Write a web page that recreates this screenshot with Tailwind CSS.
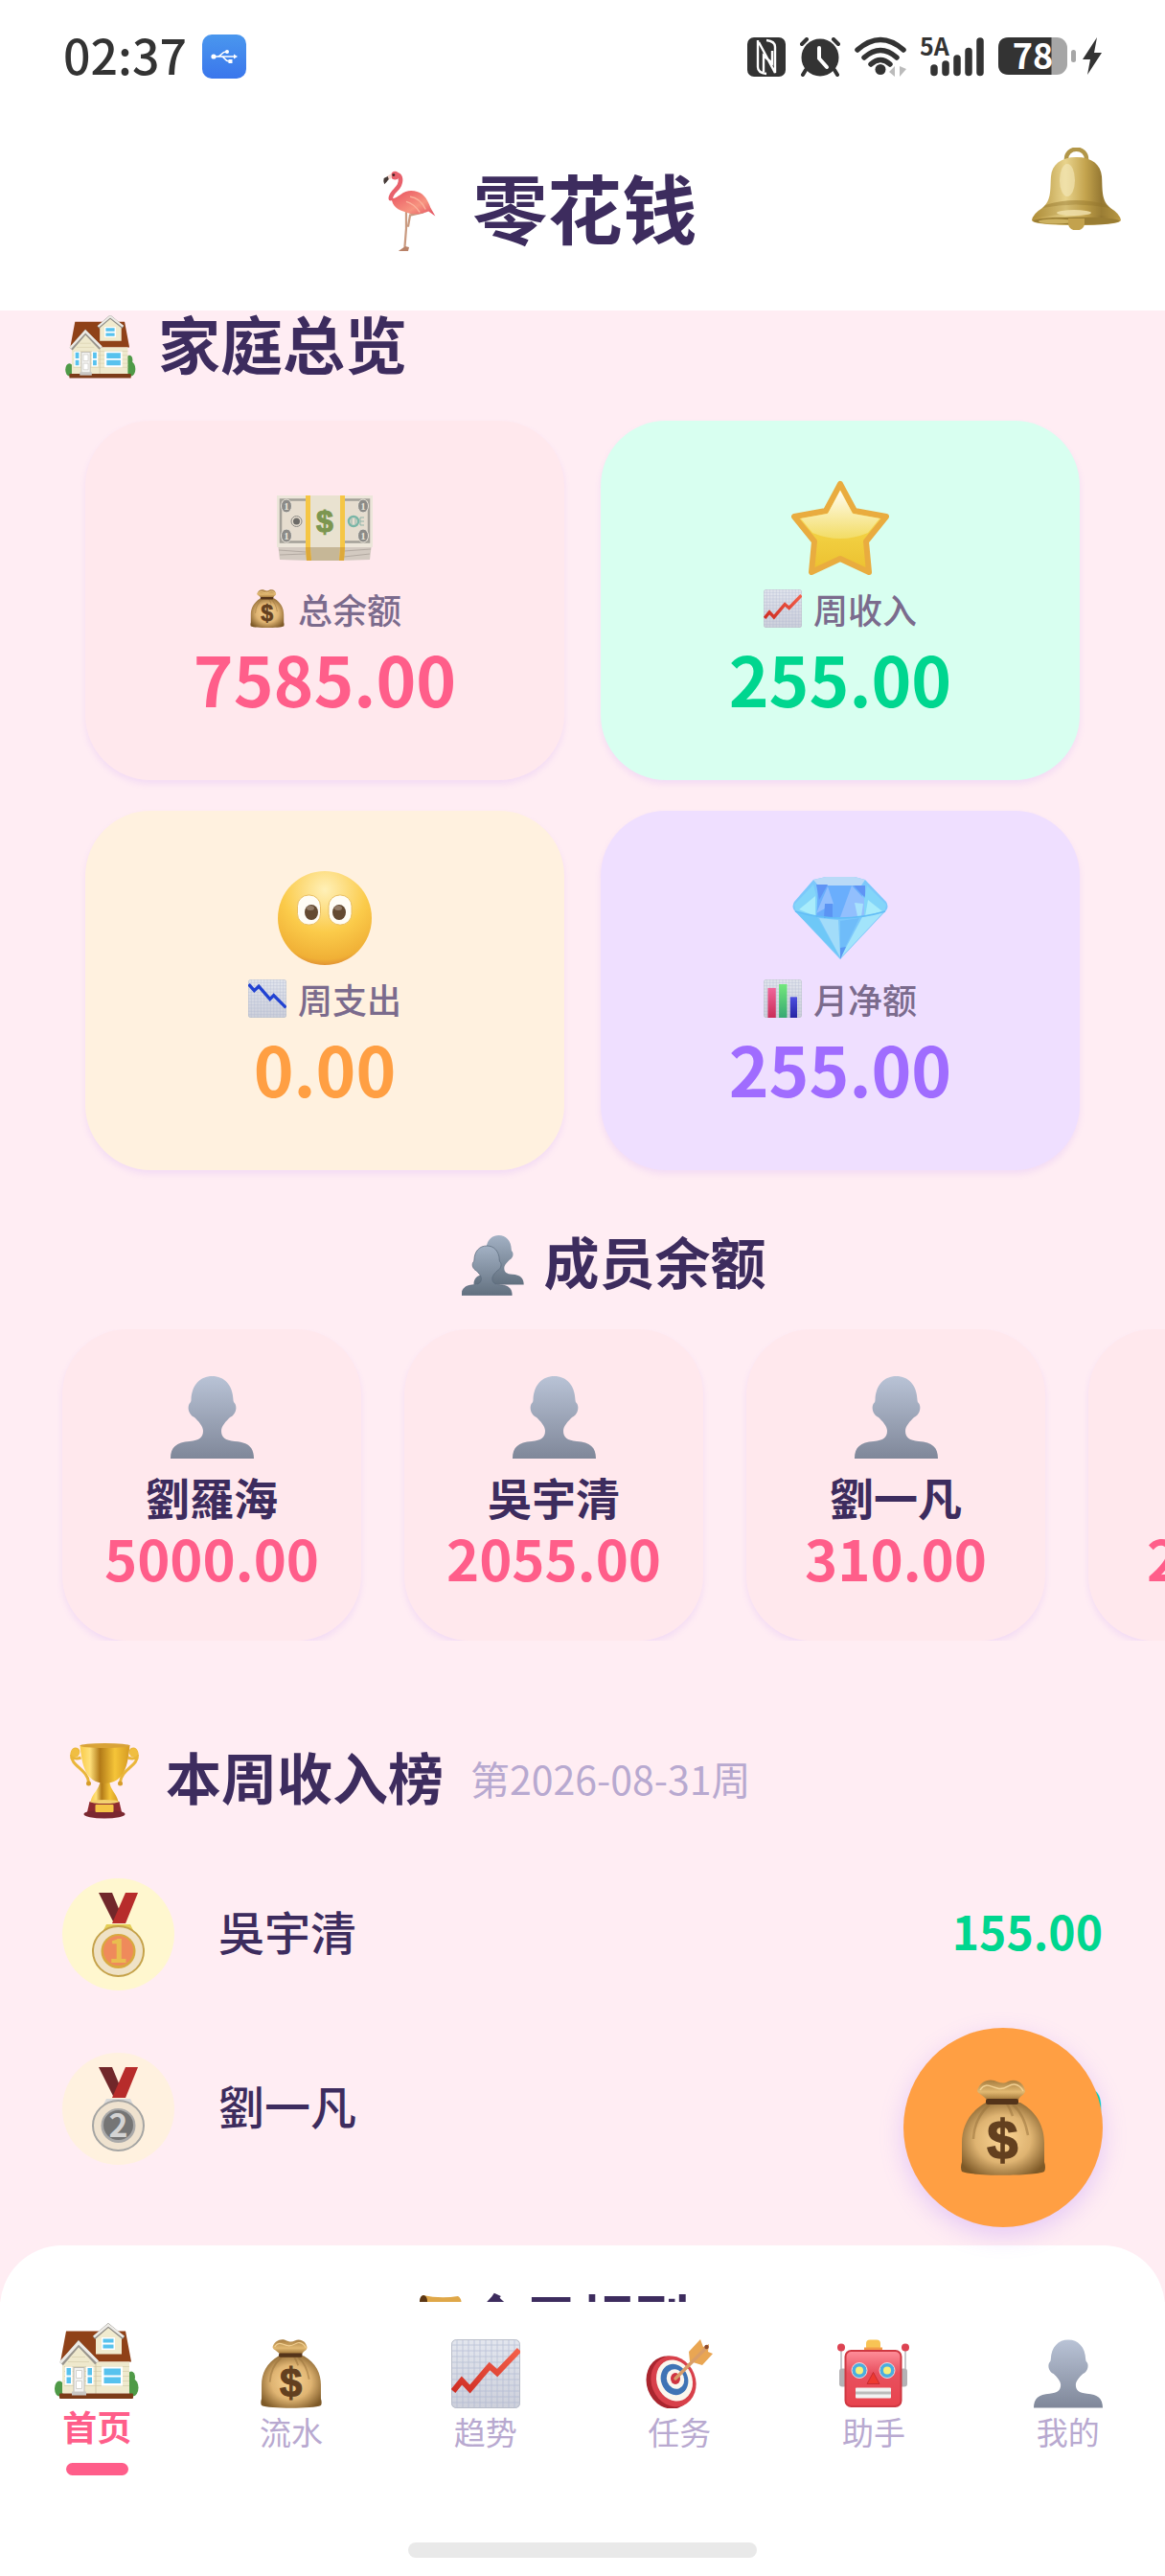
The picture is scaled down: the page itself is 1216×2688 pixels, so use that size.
<!DOCTYPE html>
<html lang="zh-CN">
<head>
    <meta charset="UTF-8">
    <meta name="viewport" content="width=device-width, initial-scale=1.0">
    <title>零花钱</title>
    <script src="https://cdn.jsdelivr.net/npm/@tailwindcss/browser@4"></script>
</head>
<body class="bg-[#ffedf3] font-['Noto_Sans_CJK_SC',sans-serif] text-[#3d2c5e]">

    <!-- Icon sprite -->
    <svg class="absolute w-0 h-0" aria-hidden="true">
        <defs>
            <linearGradient id="g-person" x1="0" y1="0" x2="0" y2="1"><stop offset="0" stop-color="#b9c3d6"/><stop offset="1" stop-color="#7f8799"/></linearGradient>
            <linearGradient id="g-person2" x1="0" y1="0" x2="0" y2="1"><stop offset="0" stop-color="#a3b1c4"/><stop offset="1" stop-color="#62707f"/></linearGradient>
            <radialGradient id="g-bag" cx=".5" cy=".5" r=".6"><stop offset="0" stop-color="#fbd594"/><stop offset=".55" stop-color="#dfb472"/><stop offset="1" stop-color="#7d5927"/></radialGradient>
            <linearGradient id="g-neck" x1="0" y1="0" x2="0" y2="1"><stop offset="0" stop-color="#a67c3f"/><stop offset=".6" stop-color="#e2b972"/><stop offset="1" stop-color="#a1773a"/></linearGradient>
            <linearGradient id="g-paper" x1="0" y1="0" x2="0" y2="1"><stop offset="0" stop-color="#e3e6ee"/><stop offset="1" stop-color="#cdd0db"/></linearGradient>
            <linearGradient id="g-red" x1="0" y1="1" x2="1" y2="0"><stop offset="0" stop-color="#cf2e24"/><stop offset="1" stop-color="#f4604a"/></linearGradient>
            <linearGradient id="g-pinkbar" x1="0" y1="0" x2="0" y2="1"><stop offset="0" stop-color="#f0659a"/><stop offset="1" stop-color="#c92d58"/></linearGradient>
            <linearGradient id="g-greenbar" x1="0" y1="0" x2="0" y2="1"><stop offset="0" stop-color="#72e87c"/><stop offset="1" stop-color="#37a873"/></linearGradient>
            <linearGradient id="g-bluebar" x1="0" y1="0" x2="0" y2="1"><stop offset="0" stop-color="#4d4fe0"/><stop offset="1" stop-color="#2524a3"/></linearGradient>
            <linearGradient id="g-star" x1="0" y1="0" x2="0" y2="1"><stop offset="0" stop-color="#fff3b0"/><stop offset=".55" stop-color="#f2d143"/><stop offset="1" stop-color="#ecc02f"/></linearGradient>
            <linearGradient id="g-starhi" x1="0" y1="0" x2="0" y2="1"><stop offset="0" stop-color="#ffffff"/><stop offset="1" stop-color="#f3df6c"/></linearGradient>
            <radialGradient id="g-face" cx=".5" cy=".2" r=".82"><stop offset="0" stop-color="#fff0b8"/><stop offset=".55" stop-color="#fbcb4a"/><stop offset=".9" stop-color="#f0b036"/><stop offset="1" stop-color="#dd8a33"/></radialGradient>
            <linearGradient id="g-gold" x1="0" y1="0" x2="1" y2="0"><stop offset="0" stop-color="#f9cb49"/><stop offset=".2" stop-color="#ffe07a"/><stop offset=".4" stop-color="#b27a18"/><stop offset=".7" stop-color="#f5c438"/><stop offset="1" stop-color="#d59a22"/></linearGradient>
            <linearGradient id="g-bell" x1="0" y1="0" x2="1" y2="0"><stop offset="0" stop-color="#b08d35"/><stop offset=".38" stop-color="#e8d38c"/><stop offset=".6" stop-color="#c4a44e"/><stop offset=".78" stop-color="#957832"/><stop offset="1" stop-color="#bd9c45"/></linearGradient>
            <linearGradient id="g-robot" x1="0" y1="0" x2="0" y2="1"><stop offset="0" stop-color="#ff8f9a"/><stop offset=".4" stop-color="#e8505f"/><stop offset="1" stop-color="#e8434d"/></linearGradient>
            <linearGradient id="g-usb" x1="0" y1="0" x2="0" y2="1"><stop offset="0" stop-color="#4a97ee"/><stop offset="1" stop-color="#3a76ec"/></linearGradient>
            <linearGradient id="g-flamingo" x1="0" y1="0" x2="1" y2="1"><stop offset="0" stop-color="#e8505f"/><stop offset=".6" stop-color="#f79480"/><stop offset="1" stop-color="#e0485c"/></linearGradient>

            <path id="person-shape" d="M0 86C0 74 6 69 20 68C30 67 34 64 34 57C34 52 29 47 25 43C20 41 17 34 19.500 29Q21.700 27 21.500 25C22 9 31 0 43.500 0C56 0 65 9 65.500 25Q65.300 27 67.500 29C70 34 67 41 62 43C58 47 53 52 53 57C53 64 57 67 67 68C81 69 87 74 87 86Z"/>
        </defs>

        <symbol id="person" viewBox="0 0 87 86"><use href="#person-shape" fill="url(#g-person)"/></symbol>

        <symbol id="people" viewBox="0 0 65 63">
            <use href="#person-shape" fill="url(#g-person2)" transform="translate(12.500 0) scale(.6)"/>
            <use href="#person-shape" fill="url(#g-person2)" stroke="#5b6a7c" stroke-width="1.200" transform="translate(0 11) scale(.6)"/>
        </symbol>

        <symbol id="bag" viewBox="0 0 88 100">
            <path d="M26 24C8 34 1 50 1 66V86Q-1 92 1 96C12 101 76 101 87 96Q89 92 87 86V66C87 50 80 34 62 24Z" fill="url(#g-bag)"/>
            <path d="M30 26Q14 40 13 62M54 26Q66 36 70 58M48 25Q52 32 54 38" fill="none" stroke="#96703a" stroke-width="2.500" opacity=".5"/>
            <path d="M27 21C22 15 17 15 17 11C20 3 27-1 35 1C40 3 44 5 49 2C58-2 66 4 67 12C66 17 62 16 60 21Z" fill="url(#g-neck)"/>
            <path d="M20 11C25 2 32 8 38 9C46 12 50 4 56 5Q62 6 65 12" fill="none" stroke="#f3d194" stroke-width="1.500"/>
            <rect x="26" y="20" width="34" height="6" rx="2" fill="#54341a"/>
            <text x="43.500" y="83" font-family="Liberation Sans" font-weight="700" font-size="58" text-anchor="middle" fill="#63401f" stroke="#63401f" stroke-width="1.500">$</text>
        </symbol>

        <symbol id="paper" viewBox="0 0 72 72">
            <rect width="72" height="72" rx="5" fill="url(#g-paper)"/>
            <path d="M6 0V72M12 0V72M18 0V72M24 0V72M30 0V72M36 0V72M42 0V72M48 0V72M54 0V72M60 0V72M66 0V72M0 6H72M0 12H72M0 18H72M0 24H72M0 30H72M0 36H72M0 42H72M0 48H72M0 54H72M0 60H72M0 66H72" stroke="#aab4cf" stroke-width=".8" opacity=".7"/>
            <rect x=".5" y=".5" width="71" height="71" rx="5" fill="none" stroke="#b9bdc9"/>
        </symbol>
        <symbol id="chart-up" viewBox="0 0 72 72">
            <use href="#paper"/>
            <path d="M2 54L11 43L19.500 52L40 28L48 35L71 11" fill="none" stroke="url(#g-red)" stroke-width="6"/>
        </symbol>
        <symbol id="chart-down" viewBox="0 0 72 72">
            <use href="#paper"/>
            <path d="M1 9L11.500 21L20 13L41 37L48 30L71 53" fill="none" stroke="#2142d2" stroke-width="6"/>
        </symbol>
        <symbol id="chart-bar" viewBox="0 0 72 72">
            <use href="#paper"/>
            <rect x="8" y="16" width="15" height="56" fill="url(#g-pinkbar)"/>
            <rect x="29" y="9" width="15" height="63" fill="url(#g-greenbar)"/>
            <rect x="50" y="33" width="13" height="39" fill="url(#g-bluebar)"/>
        </symbol>

        <symbol id="cash" viewBox="0 0 100 68">
            <path d="M1 50H99L97 67Q50 69 3 67Z" fill="#d3cac1"/>
            <path d="M2 57L30 59M3 62L30 61M70 58L98 56M70 64L97 61" stroke="#b3aaa2" stroke-width="1"/>
            <rect width="100" height="54" fill="#ece6da"/>
            <rect x="4" y="4.500" width="92" height="44" fill="#e6ddcf" stroke="#a3a098" stroke-width="2.500"/>
            <g fill="#8c8b88" stroke="#e9e3d8" stroke-width="1"><ellipse cx="10" cy="11" rx="5.500" ry="7"/><ellipse cx="90" cy="11" rx="5.500" ry="7"/><ellipse cx="10" cy="42" rx="5.500" ry="7"/><ellipse cx="90" cy="42" rx="5.500" ry="7"/></g>
            <g font-family="Liberation Serif" font-weight="700" font-size="11" text-anchor="middle" fill="#ebe5da"><text x="10" y="15">1</text><text x="90" y="15">1</text><text x="10" y="46">1</text><text x="90" y="46">1</text></g>
            <circle cx="20.500" cy="27" r="3.500" fill="#6d6b67"/><circle cx="20.500" cy="27" r="5.500" fill="none" stroke="#8c8a85"/>
            <circle cx="80" cy="27" r="5" fill="none" stroke="#79b5a6" stroke-width="2.500"/><path d="M78 24V30M82 24V30M87 23H91M87 27H91M87 31H91M87 23V31" stroke="#8fb3a8"/>
            <path d="M30 0H71V54L70 68H31L30 54Z" fill="#f5c645"/>
            <path d="M35 0H66V54L65 68H36L35 54Z" fill="#e9e2d0"/>
            <path d="M35 54H66L65 68H36Z" fill="#c6b797"/>
            <path d="M30 54H35L36 68H31ZM66 54H71L70 68H65Z" fill="#dda93a"/>
            <text x="50" y="38" font-family="Liberation Sans" font-weight="700" font-size="32" text-anchor="middle" fill="#7c9650" stroke="#7c9650" stroke-width="1">$</text>
        </symbol>

        <symbol id="star" viewBox="0 0 102 98">
            <path d="M51 3L66 31L99 37L78 63L81 95L51 81L21 95L24 63L3 37L36 31Z" fill="url(#g-star)" stroke="#e9ac3f" stroke-width="6" stroke-linejoin="round"/>
            <path d="M51 10L64 34L92 39L80 54Q51 66 22 54L10 39L38 34Z" fill="url(#g-starhi)" opacity=".85"/>
        </symbol>

        <symbol id="face" viewBox="0 0 98 98">
            <circle cx="49" cy="49" r="49" fill="url(#g-face)"/>
            <g fill="#fffdf6" stroke="#e9bf62" stroke-width="1"><rect x="20.500" y="25" width="24" height="31" rx="11.500"/><rect x="53" y="25" width="24" height="31" rx="11.500"/></g>
            <g fill="#644a31"><ellipse cx="35" cy="43" rx="7" ry="8"/><ellipse cx="64" cy="43" rx="7" ry="8"/></g>
            <g fill="#937c66"><ellipse cx="34" cy="38.500" rx="4" ry="2.500"/><ellipse cx="63" cy="38.500" rx="4" ry="2.500"/></g>
        </symbol>

        <symbol id="diamond" viewBox="0 0 100 86">
            <path d="M22 3L35 0H65L76 3L98 26Q101 31 98 35L50 86L2 35Q-1 31 2 26Z" fill="#7cc8fb"/>
            <path d="M22 3L35 0H65L76 3L72 9H27Z" fill="#b9daf7"/>
            <path d="M27 9H72L75 42H25Z" fill="#6aaefc"/>
            <path d="M25 8H37L28 24ZM64 9H76V22Z" fill="#5f94f5"/>
            <path d="M37 10L43 28L25 38ZM62 9L76 24V42H50Z" fill="#92bffd"/>
            <path d="M22 8L2 29L4 37L25 41L26 24ZM78 9L98 29L96 37L75 41V24Z" fill="#83d5f9"/>
            <path d="M24 20L7 34L24 41ZM79 24L94 36L76 41Z" fill="#a8ecfb"/>
            <path d="M34 28H42V43H33Z" fill="#5b94f3"/>
            <path d="M65 27L74 28L72 41H68Z" fill="#a8e2fc"/>
            <path d="M4 37L26 42L50 84Z" fill="#6ec8f7"/>
            <path d="M28 43L48 45L50 84Z" fill="#a2dcf9"/>
            <path d="M50 46L70 43L50 84Z" fill="#6fbcf9"/>
            <path d="M73 42L95 37L50 85Z" fill="#a2e4fb"/>
            <path d="M50 74L56 73L50 86Z" fill="#5a97f2"/>
            <path d="M3 36Q50 50 97 36" fill="none" stroke="#62bdf6" stroke-width="1.500"/>
        </symbol>

        <symbol id="house" viewBox="0 0 88 79">
            <g fill="#4f9a47"><ellipse cx="5" cy="68" rx="5" ry="8"/><ellipse cx="82" cy="67" rx="5.500" ry="9"/><ellipse cx="80" cy="56" rx="4" ry="6"/></g>
            <path d="M12 8H74L80 40H6Z" fill="#8f4118"/>
            <path d="M8 40L25 22L44 40H78V73H8Z" fill="#efe9cd"/>
            <path d="M10 45H78M10 50H78M10 55H78M10 60H78M10 65H78M18 35H32M14 40H36" stroke="#d8d0b0" stroke-width=".8"/>
            <path d="M43 41V73" stroke="#cfc7a8"/>
            <path d="M43 14L56 3L70 14V32H43Z" fill="#f1ebcf"/>
            <path d="M41 15L56 2L72 15" fill="none" stroke="#8f8c86" stroke-width="4"/>
            <path d="M41 14L56 1.500L72 14" fill="none" stroke="#edebe6" stroke-width="2.500"/>
            <path d="M7 42L25 21L44 41" fill="none" stroke="#99958d" stroke-width="5"/>
            <path d="M6 41L25 20L45 40" fill="none" stroke="#edebe6" stroke-width="3"/>
            <rect x="49" y="14.500" width="14" height="13" fill="#fff"/><path d="M50.500 16H61.500V20H50.500ZM50.500 22H61.500V26H50.500Z" fill="#57c2ee"/>
            <rect x="11" y="45" width="7.500" height="19" fill="#fff"/><rect x="33" y="45" width="7.500" height="19" fill="#fff"/>
            <path d="M12.500 46.500H17V54H12.500ZM12.500 56H17V62.500H12.500ZM34.500 46.500H39V54H34.500ZM34.500 56H39V62.500H34.500Z" fill="#57c2ee"/>
            <rect x="20" y="46" width="11" height="26" fill="#f3f3f1" stroke="#bdbab4"/><path d="M22.500 49H28.500V57H22.500ZM22.500 60H28.500V68H22.500Z" fill="#fff" stroke="#c9c7c2" stroke-width=".8"/>
            <rect x="49" y="45" width="22" height="20" fill="#fff"/><path d="M51.500 47H69V54H51.500ZM51.500 56H69V62.500H51.500Z" fill="#57c2ee"/>
            <rect x="5" y="73" width="77" height="5.500" rx="1" fill="#7c3b18"/>
            <rect x="18" y="71" width="15" height="4" fill="#c9c7c4"/>
        </symbol>

        <symbol id="trophy" viewBox="0 0 75 79">
            <g fill="none" stroke="#eab63a" stroke-width="3"><path d="M13 15C5 18 2 13 4 9C6 4 12 6 10 11M3 12C2 24 20 27 21 41"/><path d="M62 15C70 18 73 13 71 9C69 4 63 6 65 11M72 12C73 24 55 27 54 41"/></g>
            <circle cx="7" cy="10" r="4.500" fill="#f0be42"/><circle cx="68" cy="10" r="4.500" fill="#f0be42"/><circle cx="21" cy="42" r="2.500" fill="#d69c2a"/><circle cx="54" cy="42" r="2.500" fill="#d69c2a"/>
            <path d="M33 40H43C43 48 50 52 52 61H23C25 52 32 48 33 40Z" fill="url(#g-gold)"/>
            <path d="M12 2C14 22 17 41 38 42C59 41 62 22 64 2Z" fill="url(#g-gold)"/>
            <ellipse cx="38" cy="2.500" rx="26" ry="2.500" fill="#d9a338"/>
            <path d="M22 61H53L56 74H19Z" fill="#8e2a30"/>
            <ellipse cx="37.500" cy="74" rx="21.500" ry="4.500" fill="#7b2830"/>
            <ellipse cx="37.500" cy="61" rx="15" ry="2" fill="#f3d170"/>
            <rect x="28" y="64" width="19" height="8" rx="1" fill="#f5c445"/>
        </symbol>

        <symbol id="ribbon" viewBox="0 0 55 88">
            <path d="M7 0H21L31 24L23 32Z" fill="#71272a"/>
            <path d="M35 0H48L35 32H21Z" fill="#b72c2b"/>
        </symbol>
        <symbol id="medal-1" viewBox="0 0 55 88">
            <use href="#ribbon"/>
            <path d="M15 33H40L43 39H12Z" fill="#e5cf55"/>
            <ellipse cx="27.500" cy="61" rx="26.500" ry="26" fill="#efe2c6" stroke="#c5a24a" stroke-width="2"/>
            <circle cx="27.500" cy="61" r="18" fill="#d9a83f"/><circle cx="27.500" cy="60.500" r="15.500" fill="#ef8a5b"/>
            <text x="27.500" y="73" font-family="Noto Sans CJK SC" font-weight="700" font-size="34" text-anchor="middle" fill="#e9bd4f">1</text>
        </symbol>
        <symbol id="medal-2" viewBox="0 0 55 88">
            <use href="#ribbon"/>
            <path d="M15 33H40L43 39H12Z" fill="#d9d9d9"/>
            <ellipse cx="27.500" cy="61" rx="26.500" ry="26" fill="#efe2cf" stroke="#a5a5a3" stroke-width="2"/>
            <circle cx="27.500" cy="61" r="18" fill="#a9a9a9"/><circle cx="27.500" cy="60.500" r="15.500" fill="#757575"/>
            <text x="27.500" y="73" font-family="Noto Sans CJK SC" font-weight="700" font-size="34" text-anchor="middle" fill="#d3d3d3">2</text>
        </symbol>

        <symbol id="flamingo" viewBox="0 0 54 85">
            <path d="M24 42V60L22.500 79M42 43L28 46L26 58" fill="none" stroke="#c99a80" stroke-width="2.200"/>
            <path d="M16 83L23 78L27 79L26 83Z" fill="#b98268"/>
            <path d="M9 28C12 30 14 27 18 25C24 20 30 20 36 22C43 24 47 32 49 38L54 47L47 42C40 45 30 46 24 43C16 41 9 37 9 28Z" fill="url(#g-flamingo)"/>
            <path d="M28 27Q38 28 44 40M24 32Q32 34 38 43" fill="none" stroke="#fbb09b" stroke-width="1.500"/>
            <path d="M12 4.500C19 3 19 10 17 15C15 20 8 22 8 29" fill="none" stroke="#e8616c" stroke-width="4.500" stroke-linecap="round"/>
            <circle cx="12.500" cy="5" r="4.300" fill="#e8616c"/>
            <path d="M9 3L4 6L5 10L9 8Z" fill="#f4d5cd"/><path d="M5 6L1 8Q0 11 1.500 14Q4 12 6 9Z" fill="#453a36"/>
            <circle cx="11" cy="4.500" r="1.400" fill="#3f1f22"/>
        </symbol>

        <symbol id="bell" viewBox="0 0 93 86">
            <path d="M36 13C35-2 58-2 57 13" fill="none" stroke="#b29648" stroke-width="4.500"/>
            <path d="M46.500 10C63 10 72 18 73 30C74 42 72 55 82 63Q92 69 93 76Q90 81 46.500 81Q3 81 0 76Q1 69 11 63C21 55 19 42 20 30C21 18 30 10 46.500 10Z" fill="url(#g-bell)"/>
            <path d="M14 60Q46 50 79 60L82 63Q46 56 11 63Z" fill="#94752b" opacity=".5"/>
            <path d="M11 63Q46 56 82 63L91 73Q46 66 2 73Z" fill="#a98a3c" opacity=".3"/>
            <ellipse cx="44" cy="68" rx="18" ry="3" fill="#f2e4b0" opacity=".8"/>
            <ellipse cx="46.500" cy="76.500" rx="45" ry="4" fill="#9a7d33"/>
            <ellipse cx="25" cy="77" rx="18" ry="2.500" fill="#ccb160"/>
            <path d="M38 74H55V79C55 89 38 89 38 79Z" fill="#c3a24d"/>
            <ellipse cx="37" cy="34" rx="8" ry="17" fill="#f5eabd" opacity=".6"/>
        </symbol>

        <symbol id="dart" viewBox="0 0 72 72">
            <ellipse cx="26" cy="45" rx="24" ry="28" transform="rotate(-20 26 45)" fill="#a9252e"/>
            <ellipse cx="30" cy="44" rx="23" ry="27" transform="rotate(-22 30 44)" fill="#d8404a"/>
            <ellipse cx="31" cy="43" rx="18.500" ry="22" transform="rotate(-22 31 43)" fill="#fbf7ee"/>
            <ellipse cx="31" cy="42" rx="14" ry="16.500" transform="rotate(-22 31 42)" fill="#3f74b5"/>
            <ellipse cx="32" cy="41.500" rx="9" ry="10.500" transform="rotate(-22 32 41.500)" fill="#fbf7ee"/>
            <ellipse cx="32" cy="41" rx="5" ry="6" fill="#cf3440"/>
            <path d="M58 0L46 13L47 23L60 27L71 15L66 13L67 5L61 8Z" fill="#e9a653"/>
            <path d="M32 41L65 8" stroke="#d99d68" stroke-width="3.500" stroke-linecap="round"/>
            <circle cx="64.500" cy="8" r="2.200" fill="#8c4a2c"/>
        </symbol>

        <symbol id="robot" viewBox="0 0 75 71">
            <path d="M4 8V34M71 8V34" stroke="#c8c8cc" stroke-width="2"/>
            <circle cx="4" cy="8" r="4" fill="#dd4352"/><circle cx="71" cy="8" r="4" fill="#dd4352"/>
            <rect x="2" y="30" width="8" height="19" rx="3" fill="#b4b2b5"/><rect x="65" y="30" width="8" height="19" rx="3" fill="#b4b2b5"/>
            <rect x="30" y="0" width="15" height="11" rx="4" fill="#f8c455"/><rect x="28" y="8" width="19" height="4" fill="#f39a4a"/>
            <rect x="8.500" y="11.500" width="58" height="58" rx="6" fill="url(#g-robot)" stroke="#cf3842" stroke-width="2"/>
            <circle cx="23" cy="32" r="8" fill="#4aaee0" stroke="#f3d9dd" stroke-width="1"/><circle cx="52" cy="32" r="8" fill="#4aaee0" stroke="#f3d9dd" stroke-width="1"/>
            <circle cx="23" cy="32" r="4" fill="#f6f07c"/><circle cx="52" cy="32" r="4" fill="#f6f07c"/>
            <path d="M37.500 34L44 46H31Z" fill="#ee3a30" stroke="#c92b31"/>
            <rect x="19" y="50" width="37" height="11" rx="1" fill="#f2f2f2"/><path d="M19 55.500H56" stroke="#bbb" stroke-width="3"/>
        </symbol>

        <symbol id="scroll" viewBox="0 0 50 56">
            <path d="M6 6H40V50H14Z" fill="#f2cf84"/>
            <path d="M3 0Q22 4 40 1Q45 4 43 12H3Z" fill="#dfa748"/>
            <ellipse cx="4" cy="6" rx="4" ry="6" fill="#5c3714"/>
            <rect x="10" y="44" width="38" height="12" rx="5" fill="#e0a848"/>
        </symbol>
    </svg>

    <div class="flex flex-col h-screen overflow-hidden">

        <!-- Status bar -->
        <div class="flex items-center justify-between h-[118px] shrink-0 px-[66px] bg-white text-[#333]">
            <div class="flex items-center gap-4">
                <span class="pb-1.5 text-[50px] leading-none font-medium">02:37</span>
                <svg class="w-[46px] h-[46px]" viewBox="0 0 46 46">
                    <rect width="46" height="46" rx="10" fill="url(#g-usb)"/>
                    <g fill="none" stroke="#fff" stroke-width="1.500"><path d="M11 23H34M16 23C20 23 20 18 25 18M20 23C24 23 23 28 28 28"/></g>
                    <g fill="#fff"><circle cx="12" cy="23" r="2.600"/><circle cx="26" cy="18" r="2"/><rect x="27.500" y="26" width="4" height="4"/><path d="M33 20.500L37 23L33 25.500Z"/></g>
                </svg>
            </div>
            <div class="flex items-center gap-[15px]">
                <svg class="w-10 h-[41px]" viewBox="0 0 40 41"><rect width="40" height="41" rx="7" fill="#333"/><path d="M11 3V31Q11 37 20 38M12 5L29 37V10Q29 4 20 3M17 36V19L26 27V14" fill="none" stroke="#fff" stroke-width="2.400"/></svg>
                <svg class="w-[42px] h-[41px]" viewBox="0 0 42 41"><circle cx="21" cy="21" r="19.500" fill="#333"/><path d="M2 7L7 2M40 7L35 2" stroke="#333" stroke-width="4" stroke-linecap="round"/><path d="M6 34L3 39M36 34L39 39" stroke="#333" stroke-width="4" stroke-linecap="round"/><path d="M20 11V22L28 31" fill="none" stroke="#fff" stroke-width="4" stroke-linecap="round" stroke-linejoin="round"/></svg>
                <svg class="w-[54px] h-[42px]" viewBox="0 0 54 42"><g fill="none" stroke="#333" stroke-width="5.500" stroke-linecap="round"><path d="M3 14Q27-7 51 14"/><path d="M10 22Q27 7 44 22"/><path d="M17 29Q27 20 37 29"/></g><circle cx="27" cy="34.500" r="5.500" fill="#333"/><path d="M36 37L42 31V42ZM54 34L47 31V42Z" fill="#bbb"/></svg>
                <svg class="w-[66px] h-[41px]" viewBox="0 0 66 41"><text x="-1" y="19" font-family="Noto Sans CJK SC" font-weight="700" font-size="25" fill="#333">5A</text><g stroke="#333" stroke-width="7.500" stroke-linecap="round"><path d="M14 32V36.500M26 28V36.500M38 22V36.500M50 14.500V36.500M62 4V36.500"/></g></svg>
                <svg class="w-[108px] h-10" viewBox="0 0 108 40"><rect width="72" height="39" rx="11" fill="#a6a6a6"/><path d="M11 0H55.500V39H11Q0 39 0 28V11Q0 0 11 0Z" fill="#333"/><rect x="76" y="13" width="5" height="13" rx="2.500" fill="#a6a6a6"/><path d="M103 0L88 23H96L93 39L108 16H100Z" fill="#333"/><text x="36" y="33" font-family="Noto Sans CJK SC" font-weight="700" font-size="36" text-anchor="middle" fill="#fff">78</text></svg>
            </div>
        </div>

        <!-- Header -->
        <header class="flex items-center h-[206px] shrink-0 px-[43px] bg-white">
            <h1 class="flex flex-1 items-center justify-center gap-[27px] text-[78px] leading-none font-bold">
                <svg class="w-[78px] h-[86px]"><use href="#flamingo"/></svg>
                <span class="pb-3">零花钱</span>
            </h1>
            <button type="button" aria-label="通知" class="flex items-center justify-center self-start mt-[29px] w-[100px] h-[100px]">
                <svg class="w-[93px] h-[86px]"><use href="#bell"/></svg>
            </button>
        </header>

        <div class="relative flex-1 min-h-0">
            <main class="h-full overflow-hidden">

                <!-- Family overview -->
                <section>
                    <h2 class="flex items-center gap-5 h-[76px] px-[65px] text-[65px] leading-none font-bold">
                        <svg class="w-20 h-[66px]"><use href="#house"/></svg>
                        <span class="pb-2.5">家庭总览</span>
                    </h2>
                    <div class="grid grid-cols-2 gap-x-[38px] gap-y-8 mt-[39px] px-[89px]">
                        <div class="flex flex-col items-center gap-2 pt-[60px] pb-[67px] rounded-[68px] bg-[#ffe8ed] shadow-[0_4px_6px_rgba(160,108,255,0.13)]">
                            <svg class="w-[100px] h-[104px]"><use href="#cash"/></svg>
                            <p class="flex items-center gap-3 text-[36px] leading-[48px] font-medium text-[#7b6b8d]"><svg class="w-10 h-10"><use href="#bag"/></svg>总余额</p>
                            <p class="text-[71px] leading-[80px] font-bold text-[#ff5e8a]">7585.00</p>
                        </div>
                        <div class="flex flex-col items-center gap-2 pt-[60px] pb-[67px] rounded-[68px] bg-[#d8fff0] shadow-[0_4px_6px_rgba(160,108,255,0.13)]">
                            <svg class="w-[102px] h-[104px]"><use href="#star"/></svg>
                            <p class="flex items-center gap-3 text-[36px] leading-[48px] font-medium text-[#7b6b8d]"><svg class="w-10 h-10"><use href="#chart-up"/></svg>周收入</p>
                            <p class="text-[71px] leading-[80px] font-bold text-[#00d68f]">255.00</p>
                        </div>
                        <div class="flex flex-col items-center gap-2 pt-[60px] pb-[67px] rounded-[68px] bg-[#fff1df] shadow-[0_4px_6px_rgba(160,108,255,0.13)]">
                            <svg class="w-[98px] h-[104px]"><use href="#face"/></svg>
                            <p class="flex items-center gap-3 text-[36px] leading-[48px] font-medium text-[#7b6b8d]"><svg class="w-10 h-10"><use href="#chart-down"/></svg>周支出</p>
                            <p class="text-[71px] leading-[80px] font-bold text-[#ff9f43]">0.00</p>
                        </div>
                        <div class="flex flex-col items-center gap-2 pt-[60px] pb-[67px] rounded-[68px] bg-[#efdfff] shadow-[0_4px_6px_rgba(160,108,255,0.13)]">
                            <svg class="w-[100px] h-[104px]"><use href="#diamond"/></svg>
                            <p class="flex items-center gap-3 text-[36px] leading-[48px] font-medium text-[#7b6b8d]"><svg class="w-10 h-10"><use href="#chart-bar"/></svg>月净额</p>
                            <p class="text-[71px] leading-[80px] font-bold text-[#a06cff]">255.00</p>
                        </div>
                    </div>
                </section>

                <!-- Member balances -->
                <section class="mt-[59px]">
                    <h2 class="flex items-center justify-center gap-5 h-20 pl-[66px] text-[58px] leading-none font-bold">
                        <svg class="w-[65px] h-[63px]"><use href="#people"/></svg>
                        <span class="pb-2.5">成员余额</span>
                    </h2>
                    <ul class="flex gap-[45px] mt-[27px] pl-[65px] overflow-x-auto [scrollbar-width:none]">
                        <li class="flex flex-col items-center shrink-0 w-[312px] pt-10 pb-[53px] rounded-[68px] bg-[#ffe8ed] shadow-[0_4px_6px_rgba(160,108,255,0.13)]">
                            <svg class="w-[87px] h-[104px]"><use href="#person"/></svg>
                            <span class="text-[46px] leading-[60px] font-bold">劉羅海</span>
                            <span class="text-[58px] leading-[68px] font-bold text-[#ff5e8a]">5000.00</span>
                        </li>
                        <li class="flex flex-col items-center shrink-0 w-[312px] pt-10 pb-[53px] rounded-[68px] bg-[#ffe8ed] shadow-[0_4px_6px_rgba(160,108,255,0.13)]">
                            <svg class="w-[87px] h-[104px]"><use href="#person"/></svg>
                            <span class="text-[46px] leading-[60px] font-bold">吳宇清</span>
                            <span class="text-[58px] leading-[68px] font-bold text-[#ff5e8a]">2055.00</span>
                        </li>
                        <li class="flex flex-col items-center shrink-0 w-[312px] pt-10 pb-[53px] rounded-[68px] bg-[#ffe8ed] shadow-[0_4px_6px_rgba(160,108,255,0.13)]">
                            <svg class="w-[87px] h-[104px]"><use href="#person"/></svg>
                            <span class="text-[46px] leading-[60px] font-bold">劉一凡</span>
                            <span class="text-[58px] leading-[68px] font-bold text-[#ff5e8a]">310.00</span>
                        </li>
                        <li class="flex flex-col items-center shrink-0 w-[312px] pt-10 pb-[53px] rounded-[68px] bg-[#ffe8ed] shadow-[0_4px_6px_rgba(160,108,255,0.13)]">
                            <svg class="w-[87px] h-[104px]"><use href="#person"/></svg>
                            <span class="text-[46px] leading-[60px] font-bold">&nbsp;</span>
                            <span class="text-[58px] leading-[68px] font-bold text-[#ff5e8a]">220.00</span>
                        </li>
                    </ul>
                </section>

                <!-- Weekly income ranking -->
                <section class="mt-[102px] px-[65px]">
                    <div class="flex items-center h-[88px]">
                        <h2 class="flex items-center gap-5 text-[58px] leading-none font-bold">
                            <svg class="w-[88px] h-[79px]"><use href="#trophy"/></svg>
                            <span class="pb-2.5">本周收入榜</span>
                        </h2>
                        <span class="ml-7 pb-1.5 text-[41px] leading-none text-[#b8a9d0]">第2026-08-31周</span>
                    </div>
                    <ol class="flex flex-col gap-[65px] mt-[58px]">
                        <li class="flex items-center gap-[46px]">
                            <span class="flex items-center justify-center w-[117px] h-[117px] rounded-full bg-[#fff7cf]"><svg class="w-[55px] h-[88px]"><use href="#medal-1"/></svg></span>
                            <span class="flex-1 pb-2.5 text-[48px] leading-none font-medium">吳宇清</span>
                            <span class="pb-2.5 text-[48px] leading-none font-bold text-[#00d68f]">155.00</span>
                        </li>
                        <li class="flex items-center gap-[46px]">
                            <span class="flex items-center justify-center w-[117px] h-[117px] rounded-full bg-[#fff1df]"><svg class="w-[55px] h-[88px]"><use href="#medal-2"/></svg></span>
                            <span class="flex-1 pb-2.5 text-[48px] leading-none font-medium">劉一凡</span>
                            <span class="pb-2.5 text-[48px] leading-none font-bold text-[#00d68f]">100.00</span>
                        </li>
                    </ol>
                </section>

                <!-- Rules -->
                <section class="mt-[84px] pt-12 pb-16 rounded-t-[65px] bg-white">
                    <h2 class="flex items-center justify-center h-16 pr-[58px] text-[58px] leading-none font-bold">
                        <svg class="w-[50px] h-14"><use href="#scroll"/></svg>
                        <span class="pb-2.5">今日规则</span>
                    </h2>
                </section>
            </main>

            <!-- Floating action -->
            <button type="button" aria-label="记一笔" class="absolute right-[65px] bottom-[78px] flex items-center justify-center w-52 h-52 rounded-full bg-[#ff9f43] shadow-[0_8px_24px_rgba(160,108,255,0.28)]">
                <svg class="w-[88px] h-[100px]"><use href="#bag"/></svg>
            </button>
        </div>

        <!-- Tab bar -->
        <nav class="flex flex-col items-center justify-between h-[286px] shrink-0 pb-[19px] bg-white">
            <div class="grid grid-cols-6 w-full text-center text-[33px] leading-[44px] text-[#b8a9d0]">
                <a href="#home" aria-current="page" class="flex flex-col items-center pt-[18px] text-[36px] leading-[46px] font-bold text-[#ff5e8a]">
                    <svg class="w-[88px] h-[88px]"><use href="#house"/></svg>
                    首页
                    <span class="w-[65px] h-[13px] mt-4 rounded-full bg-[#ff5e8a]"></span>
                </a>
                <a href="#flow" class="flex flex-col items-center pt-[39px]"><svg class="w-[72px] h-[72px] mb-0.5"><use href="#bag"/></svg>流水</a>
                <a href="#trend" class="flex flex-col items-center pt-[39px]"><svg class="w-[72px] h-[72px] mb-0.5"><use href="#chart-up"/></svg>趋势</a>
                <a href="#task" class="flex flex-col items-center pt-[39px]"><svg class="w-[72px] h-[72px] mb-0.5"><use href="#dart"/></svg>任务</a>
                <a href="#helper" class="flex flex-col items-center pt-[39px]"><svg class="w-[75px] h-[72px] mb-0.5"><use href="#robot"/></svg>助手</a>
                <a href="#me" class="flex flex-col items-center pt-[39px]"><svg class="w-[72px] h-[72px] mb-0.5"><use href="#person"/></svg>我的</a>
            </div>
            <div class="w-[364px] h-4 rounded-full bg-[#e9e9e9]"></div>
        </nav>
    </div>
</body>
</html>
